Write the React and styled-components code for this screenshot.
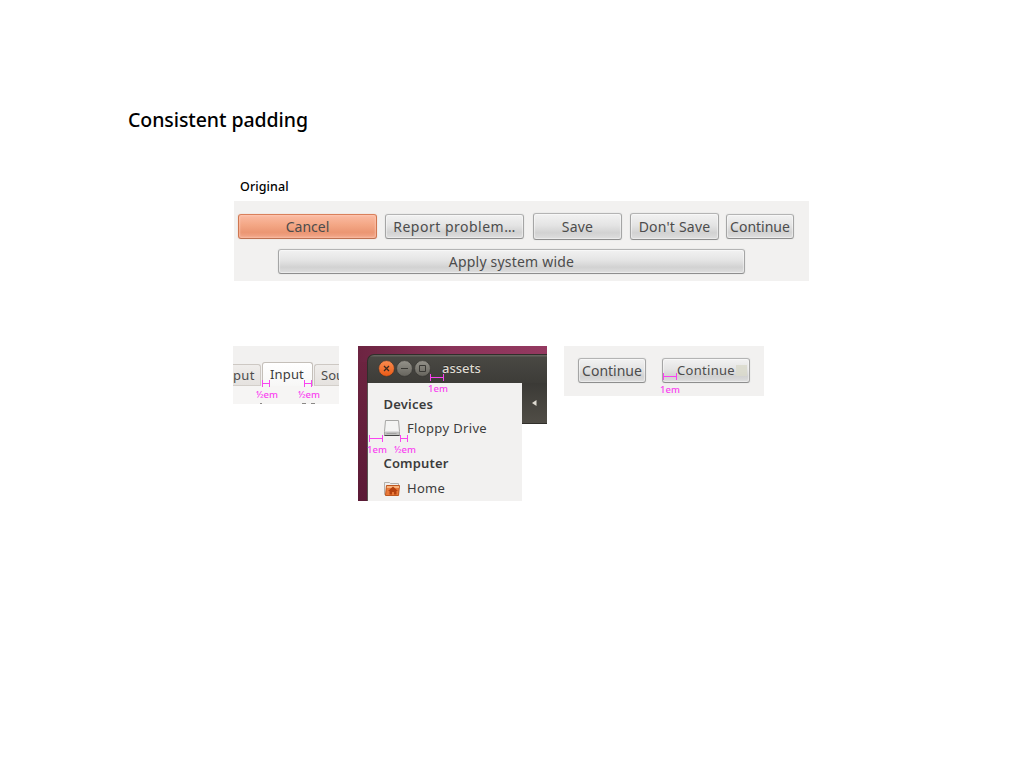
import React from "react";
import styled, { createGlobalStyle, css } from "styled-components";

const Global = createGlobalStyle`
  * { box-sizing: border-box; }
  body { margin: 0; background: #fff; font-family: "Noto Sans", "Open Sans", sans-serif; }
`;

const Page = styled.main`
  width: 1025px;
  height: 768px;
  padding: 106px 0 0 128px;
  overflow: hidden;
  background: #fff;
`;

const Text = styled.span`
  display: block;
  white-space: nowrap;
  font-size: ${(p) => p.$size || 14}px;
  line-height: ${(p) => p.$line || 20}px;
  letter-spacing: ${(p) => p.$track || 0}px;
  font-weight: ${(p) => p.$weight || 400};
  color: ${(p) => p.$color || "#4c4c4c"};
`;

const Title = styled.h1`
  margin: 0;
  font-size: 19.5px;
  line-height: 28px;
  font-weight: 500;
  letter-spacing: -0.07px;
  color: #000;
`;

const Subtitle = styled.h2`
  margin: 43px 0 0 112px;
  font-size: 12.5px;
  line-height: 20px;
  font-weight: 500;
  letter-spacing: 0.1px;
  color: #000;
`;

const ButtonPanel = styled.section`
  width: 575px;
  height: 80px;
  margin: 4px 0 0 106px;
  padding: 12px 15px 0 4px;
  background: #f2f1f0;
`;

const ButtonRow = styled.div`
  display: flex;
  align-items: center;
  height: 27px;
  margin: ${(p) => p.$margin || 0};
`;

const danger = css`
  border-color: #d9805c #cf7650 #bd7152;
  background: linear-gradient(#fbbba3, #f3a684 45%, #eb9673 75%, #f2a688);
  box-shadow: inset 0 0 2px 1px rgba(255, 205, 185, 0.6), 0 0 0 1px #f0eae7;
`;

const Button = styled.button`
  display: flex;
  align-items: center;
  justify-content: center;
  flex: none;
  width: ${(p) => p.$w}px;
  height: ${(p) => p.$h || 25}px;
  margin: 0 0 0 ${(p) => p.$gap || 0}px;
  padding: ${(p) => p.$pad || 0};
  border: 1px solid;
  border-color: #b4b4b4 #a5a5a5 #8e8e8e;
  border-radius: 3px;
  background: linear-gradient(#f2f2f2, #e4e4e4 45%, #d2d2d2 75%, #dedede);
  box-shadow: inset 0 0 1px 1px rgba(255, 255, 255, 0.45), 0 0 0 1px #ececeb;
  font-family: inherit;
  ${(p) => p.$danger && danger}
`;

const Examples = styled.div`
  display: flex;
  align-items: flex-start;
  margin: 65px 0 0 105px;
`;

const Measure = styled.div`
  position: absolute;
  left: ${(p) => p.$x}px;
  top: ${(p) => p.$y}px;
  width: ${(p) => p.$w}px;
  height: 7px;
  border: solid #f943f0;
  border-width: 0 1px;
  background: linear-gradient(#f943f0, #f943f0) 0 3px / 100% 1px no-repeat;
`;

const MeasureLabel = styled.span`
  position: absolute;
  left: ${(p) => p.$x}px;
  top: ${(p) => p.$y}px;
  white-space: nowrap;
  font: 500 9.5px/12px "Noto Sans", sans-serif;
  color: #f943f0;
`;

const TabPanel = styled.section`
  position: relative;
  width: 106px;
  height: 58px;
  overflow: hidden;
  background: #f2f1f0;
`;

const TabBar = styled.div`
  display: flex;
  align-items: flex-end;
  height: 40px;
  gap: 1px;
`;

const Tab = styled.div`
  flex: none;
  width: ${(p) => p.$w}px;
  height: ${(p) => (p.$active ? 24 : 22)}px;
  padding: ${(p) => p.$pad};
  overflow: hidden;
  border: 1px solid ${(p) => (p.$active ? "#c4bfb9" : "#cdc8c3")};
  border-bottom: ${(p) => (p.$active ? "0" : "1px solid #d3cfca")};
  border-left-width: ${(p) => (p.$cut === "left" ? 0 : 1)}px;
  border-right-width: ${(p) => (p.$cut === "right" ? 0 : 1)}px;
  border-radius: ${(p) => (p.$cut === "left" ? 0 : 3)}px ${(p) => (p.$cut === "right" ? 0 : 3)}px 0 0;
  background: ${(p) => (p.$active ? "linear-gradient(#fff, #f7f7f6)" : "linear-gradient(#efedeb, #e5e2df)")};
`;

const TabBody = styled.div`
  display: flex;
  align-items: flex-end;
  height: 18px;
  padding-left: 27px;
  background: #f6f5f4;
`;

const Desktop = styled.section`
  position: relative;
  width: 189px;
  height: 155px;
  margin-left: 19px;
`;

const Wallpaper = styled.div`
  height: 155px;
  padding: 8px 0 0 9px;
  background: linear-gradient(90deg, #6c2441, #8a3359 50%, #943960) 0 0 / 189px 16px no-repeat,
    linear-gradient(#6e2541, #5b1a36) 0 0 / 10px 155px no-repeat;
`;

const Window = styled.div`
  width: 180px;
  height: 147px;
`;

const TitleBar = styled.div`
  display: flex;
  align-items: center;
  gap: 1px;
  height: 29px;
  padding: 0 0 1px 10px;
  border-top: 1px solid #302f2b;
  border-left: 1px solid #302f2b;
  border-radius: 7px 0 0 0;
  background: linear-gradient(#63625c 0 1px, #494843 2px, #3d3c38);
`;

const WindowTitle = styled(Text)`
  margin: -1px 0 0 10px;
  text-shadow: 0 -1px #2b2a27;
`;

const WindowBody = styled.div`
  display: flex;
  align-items: flex-start;
  height: 118px;
  border-left: 1px solid #5b5753;
`;

const Sidebar = styled.div`
  width: 154px;
  height: 118px;
  padding: 11px 0 0 15.5px;
  background: #f2f1f0;
`;

const Place = styled.div`
  display: flex;
  align-items: center;
  gap: 7.5px;
  height: 20px;
  margin: ${(p) => p.$margin};
`;

const Toolbar = styled.div`
  display: flex;
  align-items: center;
  justify-content: center;
  width: 25px;
  height: 41px;
  border-bottom: 1px solid #302f2b;
  background: linear-gradient(#3b3a36, #504d46);
`;

const ContinuePanel = styled.section`
  position: relative;
  display: flex;
  align-items: flex-start;
  gap: 16px;
  width: 200px;
  height: 50px;
  margin-left: 17px;
  padding: 12px 14px 0;
  background: #f2f1f0;
`;

const Patch = styled.span`
  position: absolute;
  left: 172px;
  top: 19px;
  width: 11px;
  height: 11px;
  background: #dad9cb;
  opacity: 0.8;
`;

function WindowControl({ kind }) {
  const close = kind === "close";
  return (
    <svg width="17" height="17" viewBox="0 0 17 17">
      <defs>
        <linearGradient id={`fill-${kind}`} x2="0" y2="1">
          <stop stopColor={close ? "#fa8c50" : "#94928a"} />
          <stop offset="1" stopColor={close ? "#ea5a15" : "#66645d"} />
        </linearGradient>
      </defs>
      <circle cx="8.5" cy="8.5" r="7.9" fill={`url(#fill-${kind})`} stroke="#302f2b" strokeWidth=".6" />
      {close && <path d="M6 6l5 5m0-5l-5 5" stroke="#3c2a20" strokeWidth="1.3" />}
      {kind === "min" && <path d="M5 8.5h7" stroke="#3a3935" />}
      {kind === "max" && <path d="M5.5 5.5h6v6h-6z" fill="none" stroke="#3a3935" />}
    </svg>
  );
}

function DriveIcon() {
  return (
    <svg width="16" height="16" viewBox="0 0 16 16">
      <path d="M1.5.5h13l1 11v4H.5v-4z" fill="#f4f4f3" stroke="#a6a6a4" />
      <path d="M1 11.5h14V15H1z" fill="#c2c2c1" />
      <path d="M1 11.5h14" stroke="#ddd" />
      <path d="M.5 15.5h15" stroke="#444" />
      <path d="M2.5 13.5h10" stroke="#a4a4a3" />
    </svg>
  );
}

function HomeIcon() {
  return (
    <svg width="16" height="15" viewBox="0 0 16 15">
      <path d="M.5 13.5v-12h5l1 1h8v11z" fill="#eee" stroke="#b5b1ab" />
      <path d="M2.5 4.5h13l-1 10h-13z" fill="#ea7a3a" stroke="#bd571f" />
      <path d="M3 5h12v2H2.8z" fill="#f8b37d" />
      <path d="M9 5.5L4 10h1.5v3.5H8V11h2v2.5h2.5V10H14z" fill="#b4410f" />
    </svg>
  );
}

function ClippedMarks() {
  return (
    <svg width="60" height="1" viewBox="0 0 60 1">
      <path d="M0 .5h2M42 .5h4M51 .5h4" stroke="#8a8886" />
    </svg>
  );
}

export default function App() {
  return (
    <Page>
      <Global />
      <Title>Consistent padding</Title>
      <Subtitle>Original</Subtitle>
      <ButtonPanel>
        <ButtonRow>
          <Button $w={139} $danger><Text>Cancel</Text></Button>
          <Button $w={139} $gap={8}><Text $track={0.5}>Report problem…</Text></Button>
          <Button $w={89} $h={27} $gap={9}><Text $track={0.2}>Save</Text></Button>
          <Button $w={89} $h={27} $gap={8}><Text $track={0.2}>Don't Save</Text></Button>
          <Button $w={68} $gap={7}><Text>Continue</Text></Button>
        </ButtonRow>
        <ButtonRow $margin="8px 0 0 40px">
          <Button $w={467}><Text $track={0.2}>Apply system wide</Text></Button>
        </ButtonRow>
      </ButtonPanel>

      <Examples>
        <TabPanel>
          <TabBar>
            <Tab $w={28} $cut="left" $pad="0"><Text $size={13} $track={0.3}>put</Text></Tab>
            <Tab $w={51} $active $pad="1px 0 0 7px"><Text $size={13} $track={0.15} $color="#3c3c3c">Input</Text></Tab>
            <Tab $w={25} $cut="right" $pad="0 0 0 6px"><Text $size={13}>Sou</Text></Tab>
          </TabBar>
          <TabBody><ClippedMarks /></TabBody>
          <Measure $x={29} $y={34} $w={8} />
          <MeasureLabel $x={23} $y={43}>½em</MeasureLabel>
          <Measure $x={71} $y={34} $w={8} />
          <MeasureLabel $x={65} $y={43}>½em</MeasureLabel>
        </TabPanel>

        <Desktop>
          <Wallpaper>
            <Window>
              <TitleBar>
                <WindowControl kind="close" />
                <WindowControl kind="min" />
                <WindowControl kind="max" />
                <WindowTitle $size={13} $weight={500} $color="#dfdbd2">assets</WindowTitle>
              </TitleBar>
              <WindowBody>
                <Sidebar>
                  <Text $size={13} $weight={600} $track={0.2} $color="#3c3c3c">Devices</Text>
                  <Place $margin="4px 0 0"><DriveIcon /><Text $size={13} $track={0.35} $color="#3c3c3c">Floppy Drive</Text></Place>
                  <Text $size={13} $weight={600} $track={0.15} $line={50} $color="#3c3c3c">Computer</Text>
                  <Place $margin="-10px 0 0"><HomeIcon /><Text $size={13} $track={0.25} $color="#3c3c3c">Home</Text></Place>
                </Sidebar>
                <Toolbar>
                  <svg width="5" height="6" viewBox="0 0 5 6"><path d="M0 3l4.5-3v6z" fill="#dfdbd2" /></svg>
                </Toolbar>
              </WindowBody>
            </Window>
          </Wallpaper>
          <Measure $x={72} $y={28} $w={14} />
          <MeasureLabel $x={70} $y={37}>1em</MeasureLabel>
          <Measure $x={11} $y={89} $w={14} />
          <MeasureLabel $x={9} $y={98}>1em</MeasureLabel>
          <Measure $x={42} $y={89} $w={8} />
          <MeasureLabel $x={36} $y={98}>½em</MeasureLabel>
        </Desktop>

        <ContinuePanel>
          <Button $w={68}><Text>Continue</Text></Button>
          <Button $w={88} $pad="0 0 1px"><Text $size={13} $track={0.3}>Continue</Text></Button>
          <Patch />
          <Measure $x={99} $y={27} $w={14} />
          <MeasureLabel $x={96} $y={38}>1em</MeasureLabel>
        </ContinuePanel>
      </Examples>
    </Page>
  );
}
